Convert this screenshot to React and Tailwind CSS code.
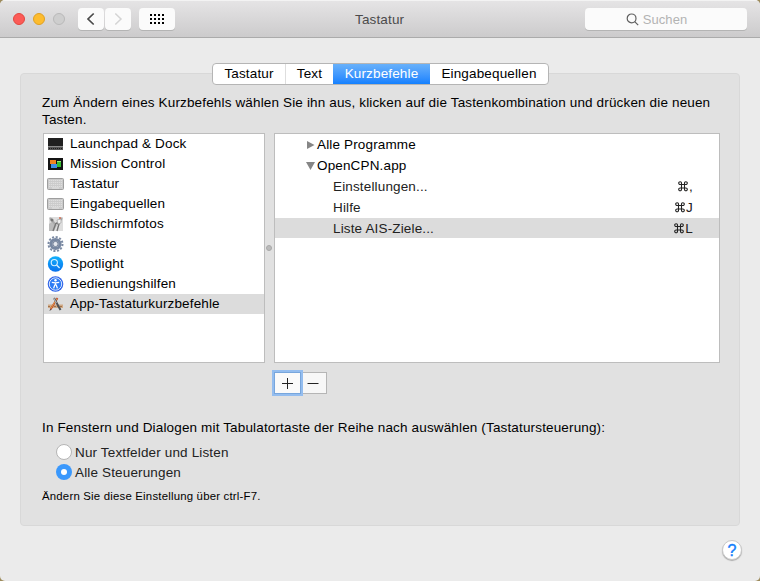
import React from "react";

const ShortcutIcon = ({ kind }) => {
  const p = { width: 17, height: 16, viewBox: "0 0 17 16", className: "block shrink-0" };
  switch (kind) {
    case "dock":
      return (
        <svg {...p}>
          <rect x="1" y="2" width="15" height="12" fill="#555" />
          <rect x="1" y="2" width="15" height="9" fill="#202020" />
          <rect x="1" y="10" width="15" height="1" fill="#8a8a8a" />
          <path d="M2 12.5h13" stroke="#1d1d1d" strokeDasharray="1 1" />
        </svg>
      );
    case "mission":
      return (
        <svg {...p}>
          <rect x="1" y="2" width="15" height="12" fill="#141414" />
          <rect x="3" y="4" width="6" height="4" fill="#f28322" />
          <rect x="4" y="8" width="6" height="4" fill="#3f8fe8" />
          <rect x="10" y="5" width="4" height="6" fill="#35bd32" />
          <path d="M10 5.5h4" stroke="#9be67b" />
        </svg>
      );
    case "keyboard":
      return (
        <svg {...p}>
          <rect x="0.5" y="2.5" width="16" height="11" rx="1" fill="#cbcbcb" stroke="#9e9e9e" />
          <path d="M2 4.5h13M2 6.5h13M2 8.5h13M2 10.5h13" stroke="#dedede" strokeDasharray="1.3 .7" />
          <path d="M5 12h7" stroke="#e2e2e2" />
        </svg>
      );
    case "screenshot":
      return (
        <svg {...p}>
          <rect x="2" y="1" width="14" height="14" fill="#dedede" />
          <path d="M2 15V8l4-3 4 4-3 6z" fill="#bbb" />
          <path d="M3 2l5 6M15 2l-5 6" stroke="#aaa" strokeWidth="2" />
          <path d="M9 7l3 1-2 7M9 7l-3 8" fill="none" stroke="#777" strokeWidth="1.4" />
          <circle cx="5" cy="4" r="1.5" fill="#777" />
          <path d="M10 4l4-1v4l-3 1z" fill="#f1f1f1" stroke="#999" strokeWidth=".6" />
          <circle cx="13" cy="2" r="1" fill="#d36c50" />
        </svg>
      );
    case "gear":
      return (
        <svg {...p}>
          <circle cx="8.5" cy="8" r="7" fill="none" stroke="#7b8aa3" strokeWidth="2" strokeDasharray="2.1 1.56" />
          <circle cx="8.5" cy="8" r="4.6" fill="#c8ced8" stroke="#7787a1" strokeWidth="3" />
          <circle cx="8.5" cy="8" r="2.6" fill="#e4e7ed" stroke="#5c6c87" strokeWidth=".8" />
        </svg>
      );
    case "spotlight":
      return (
        <svg {...p}>
          <defs>
            <linearGradient id="spot" x1="0" y1="0" x2="0" y2="1">
              <stop stopColor="#12b0fb" />
              <stop offset="1" stopColor="#0871ed" />
            </linearGradient>
          </defs>
          <circle cx="8.5" cy="8" r="7.7" fill="url(#spot)" />
          <circle cx="7.3" cy="6.6" r="3.1" fill="none" stroke="#d7f0ff" strokeWidth="1.1" />
          <path d="M9.6 9l3 3" stroke="#d7f0ff" strokeWidth="1.3" />
        </svg>
      );
    case "access":
      return (
        <svg {...p}>
          <circle cx="8.5" cy="8" r="7.8" fill="#2d62e8" />
          <circle cx="8.5" cy="8" r="6.2" fill="#2d7df5" stroke="#dce9ff" strokeWidth="1" />
          <circle cx="8.5" cy="4.2" r="1.2" fill="#fff" />
          <path d="M4.8 6.3l3.7.6 3.7-.6M8.5 6.5v3M7.9 8.6L6.6 12.4M9.1 8.6l1.3 3.8" fill="none" stroke="#fff" strokeWidth="1.3" />
        </svg>
      );
    default:
      return (
        <svg {...p}>
          <path d="M1 8.5h15v3.5H1z" fill="#d0aa86" />
          <path d="M1 10.5h15" stroke="#a0714b" strokeDasharray="2 1" />
          <path d="M10.5 2L3.5 13.5" stroke="#b9432d" strokeWidth="1.8" />
          <path d="M10 2.6L3.6 12.8" stroke="#efb54d" strokeWidth=".8" />
          <path d="M7 2l6.5 12" stroke="#4f5155" strokeWidth="2" />
          <path d="M6.6 2l2.8 5" stroke="#b7b7b7" strokeWidth="1.2" />
          <path d="M3.4 12.8l-1 2.2 2-1.2" fill="#444" />
        </svg>
      );
  }
};

const categories = [
  ["dock", "Launchpad & Dock"],
  ["mission", "Mission Control"],
  ["keyboard", "Tastatur"],
  ["keyboard", "Eingabequellen"],
  ["screenshot", "Bildschirmfotos"],
  ["gear", "Dienste"],
  ["spotlight", "Spotlight"],
  ["access", "Bedienungshilfen"],
  ["apps", "App-Tastaturkurzbefehle"],
];

const shortcuts = [
  ["Einstellungen...", ","],
  ["Hilfe", "J"],
  ["Liste AIS-Ziele...", "L"],
];

const Command = () => (
  <svg width="12" height="11" viewBox="0 0 12 11" fill="none" stroke="#222" strokeWidth="1.1" className="block">
    <path d="M4.5 3.5V2.2A1.4 1.4 0 1 0 3.1 3.5h5.8A1.4 1.4 0 1 0 7.5 2.2v6.1A1.4 1.4 0 1 0 8.9 7H3.1A1.4 1.4 0 1 0 4.5 8.3z" />
  </svg>
);

const toolButton = "flex h-[22px] items-center justify-center rounded-[4px] bg-[#fbfbfb] shadow-[0_1px_0_#b4b4b4]";

export default function App() {
  return (
    <div className="h-[581px] w-[760px] overflow-hidden bg-[#9d8b5c] font-['Liberation_Sans',Arial,sans-serif] text-[13.5px] leading-[17px] tracking-[0.15px] text-black">
      <div className="flex h-full flex-col overflow-hidden rounded-[5px] bg-[#ebebeb]">
        <header className="flex h-[38px] shrink-0 items-center border-t border-b border-t-[#f3f3f3] border-b-[#ababab] bg-linear-to-b from-[#e5e4e5] to-[#cccbcc] pl-[13px]">
          <div className="flex w-[65px] gap-2">
            <i className="size-3 rounded-full border border-[#e2473f] bg-[#fc5b57]" />
            <i className="size-3 rounded-full border border-[#dfa023] bg-[#fdbc2e]" />
            <i className="size-3 rounded-full border border-[#b9b9b9] bg-[#cecece]" />
          </div>
          <div className="flex gap-px">
            <div className={`${toolButton} w-[26px]`}>
              <svg width="10" height="14" fill="none" stroke="#4a4a4a" strokeWidth="1.7"><path d="M7.7 1.5L2 7l5.7 5.5" /></svg>
            </div>
            <div className={`${toolButton} w-[26px]`}>
              <svg width="10" height="14" fill="none" stroke="#d4d4d4" strokeWidth="1.5"><path d="M2.3 1.5L8 7l-5.7 5.5" /></svg>
            </div>
          </div>
          <div className={`${toolButton} ml-2 w-9`}>
            <svg width="14" height="10" fill="#000">
              {[0, 4, 8].flatMap((y) => [0, 4, 8, 12].map((x) => <rect key={`${x}-${y}`} x={x} y={y} width="2" height="2" />))}
            </svg>
          </div>
          <div className="flex-1 pl-[180px] text-[#4b4b4b]">Tastatur</div>
          <div className={`${toolButton} mr-[13px] w-[162px] gap-[4px] pr-[19px] text-[13px] tracking-[0.1px] text-[#b3b3b3]`}>
            <svg width="13" height="13" fill="none" stroke="#606060" strokeWidth="1.2"><circle cx="5.6" cy="5.4" r="4.4" /><path d="M8.7 8.6l3.5 3.5" /></svg>
            <span>Suchen</span>
          </div>
        </header>

        <main className="relative mx-5 mt-[35px] h-[453px] shrink-0 rounded-[4px] border border-[#d8d8d8] bg-[#e1e1e1]">
          <nav className="absolute top-[-11px] left-[191px] flex h-[22px] w-[337px] overflow-hidden rounded-[4px] border border-[#b5b5b5] bg-white leading-[20px]">
            <div className="w-[73px] border-r border-[#dedede] text-center">Tastatur</div>
            <div className="w-[47px] text-center">Text</div>
            <div className="-my-px w-[97px] bg-linear-to-b from-[#6bb3fa] to-[#087eff] pt-px text-center text-white">Kurzbefehle</div>
            <div className="flex-1 text-center">Eingabequellen</div>
          </nav>

          <p className="h-[59px] pt-5 pl-[21px] whitespace-nowrap">
            Zum Ändern eines Kurzbefehls wählen Sie ihn aus, klicken auf die Tastenkombination und drücken die neuen
            <br />
            Tasten.
          </p>

          <div className="flex pl-[22px]">
            <ul className="h-[230px] w-[222px] border border-[#bdbdbd] bg-white">
              {categories.map(([kind, name]) => (
                <li key={name} className={`flex h-5 items-center gap-[6px] pb-px pl-[3px] whitespace-nowrap ${kind === "apps" ? "bg-[#dcdcdc]" : ""}`}>
                  <ShortcutIcon kind={kind} />
                  <span>{name}</span>
                </li>
              ))}
            </ul>
            <div className="flex w-[9px] items-center justify-center pr-px">
              <i className="size-[6px] shrink-0 rounded-full border border-[#a8a8a8] bg-[#bababa]" />
            </div>
            <div className="h-[230px] w-[446px] border border-[#bdbdbd] bg-white">
              <div className="flex h-[21px] items-center pl-[31px]">
                <svg width="11" height="10" fill="#868686"><path d="M1 1l7.5 4L1 9z" /></svg>
                <span>Alle Programme</span>
              </div>
              <div className="flex h-[21px] items-center pl-[31px]">
                <svg width="11" height="10" fill="#868686"><path d="M0 1h9L4.5 9z" /></svg>
                <span>OpenCPN.app</span>
              </div>
              {shortcuts.map(([name, key]) => (
                <div key={key} className={`flex items-center justify-between pr-[26px] pl-[58px] text-[#222] ${key === "L" ? "h-5 bg-[#dcdcdc]" : "h-[21px]"}`}>
                  <span>{name}</span>
                  <span className="flex items-center"><Command />{key}</span>
                </div>
              ))}
            </div>
          </div>

          <div className="flex h-[49px] pt-[9px] pl-[253px]">
            <div className="z-10 flex h-[22px] w-[27px] items-center justify-center border border-[#78a6dc] bg-[#fafafa] shadow-[0_0_0_2px_#94bdef]">
              <svg width="11" height="11" fill="none" stroke="#222" strokeWidth="1"><path d="M0 5.5h11M5.5 0v11" /></svg>
            </div>
            <div className="flex h-[22px] w-[26px] items-center justify-center border border-l-0 border-[#b5b5b5] bg-[#f7f7f7] pr-px">
              <svg width="12" height="11" fill="none" stroke="#222" strokeWidth="1"><path d="M.5 5.5h11" /></svg>
            </div>
          </div>

          <p className="mt-[7px] pl-[21px] whitespace-nowrap">In Fenstern und Dialogen mit Tabulatortaste der Reihe nach auswählen (Tastatursteuerung):</p>
          <div className="mt-[6px] pl-[35px] text-[#222]">
            <div className="flex h-5 items-center gap-[3px]">
              <i className="size-4 rounded-full border border-[#b5b5b5] bg-white" />
              <span>Nur Textfelder und Listen</span>
            </div>
            <div className="flex h-5 items-center gap-[3px]">
              <i className="flex size-4 items-center justify-center rounded-full bg-[#3a98fc]"><b className="size-[6px] rounded-full bg-white" /></i>
              <span>Alle Steuerungen</span>
            </div>
          </div>
          <p className="mt-[6px] pl-[21px] text-[11.4px] tracking-[0.2px]">Ändern Sie diese Einstellung über ctrl-F7.</p>
        </main>

        <footer className="flex justify-end pt-[14px] pr-[18px]">
          <div className="flex size-5 items-center justify-center rounded-full border border-[#c8c8c8] bg-white text-[16px] tracking-normal text-[#147efb] shadow-[0_1px_1px_#aaa] [-webkit-text-stroke:0.4px_#147efb]">?</div>
        </footer>
      </div>
    </div>
  );
}
